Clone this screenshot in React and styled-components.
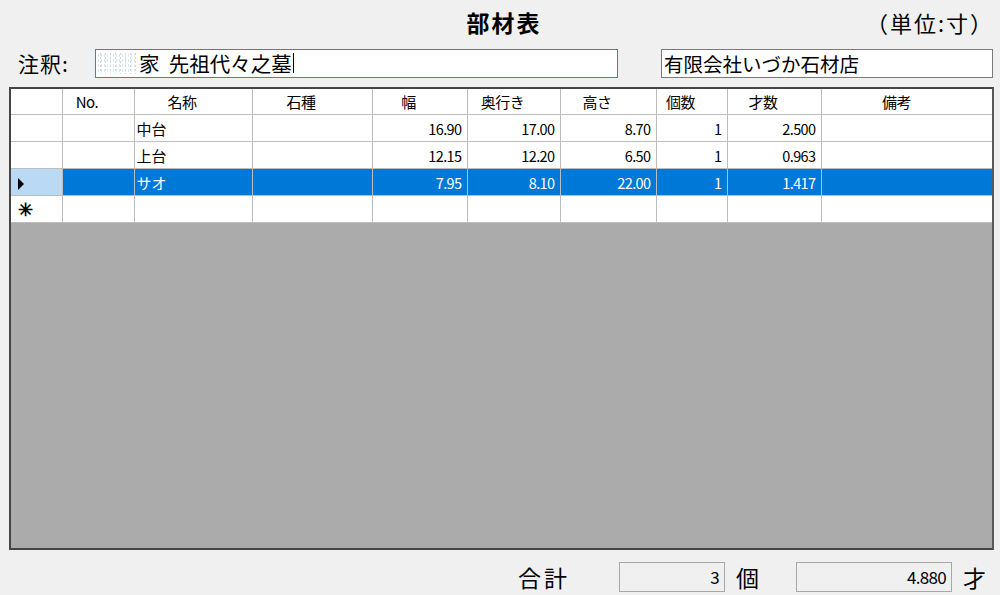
import React from "react";
import styled, { createGlobalStyle } from "styled-components";

const columns = [
  { key: "no", label: "No.", width: 72 },
  { key: "name", label: "名称", width: 118, align: "left" },
  { key: "stone", label: "石種", width: 120 },
  { key: "w", label: "幅", width: 95, align: "right" },
  { key: "d", label: "奥行き", width: 93, align: "right" },
  { key: "h", label: "高さ", width: 96, align: "right" },
  { key: "qty", label: "個数", width: 71, align: "right" },
  { key: "sai", label: "才数", width: 94, align: "right" },
  { key: "note", label: "備考", width: 173 },
];

const rows = [
  { name: "中台", w: "16.90", d: "17.00", h: "8.70", qty: "1", sai: "2.500" },
  { name: "上台", w: "12.15", d: "12.20", h: "6.50", qty: "1", sai: "0.963" },
  { name: "サオ", w: "7.95", d: "8.10", h: "22.00", qty: "1", sai: "1.417", selected: true },
];

const App = () => {
  return (
    <>
      <Global />
      <Window>
        <TitleBar>
          <span />
          <Title>部材表</Title>
          <Unit>（単位:寸）</Unit>
        </TitleBar>

        <NoteRow>
          <NoteLabel>注釈:</NoteLabel>
          <TextBox $focused $width={523}>
            <Redacted />
            家&nbsp;&nbsp;先祖代々之墓
            <Caret />
          </TextBox>
          <TextBox $width={332}>有限会社いづか石材店</TextBox>
        </NoteRow>

        <GridFrame>
          <Table>
            <colgroup>
              <col style={{ width: 51 }} />
              {columns.map((c) => (
                <col key={c.key} style={{ width: c.width }} />
              ))}
            </colgroup>
            <thead>
              <tr>
                <HeadCell />
                {columns.map((c) => (
                  <HeadCell key={c.key}>{c.label}</HeadCell>
                ))}
              </tr>
            </thead>
            <tbody>
              {rows.map((r, i) => (
                <tr key={i}>
                  <RowHead $selected={r.selected}>
                    {r.selected && <Arrow />}
                  </RowHead>
                  {columns.map((c) => (
                    <Cell key={c.key} $align={c.align} $selected={r.selected}>
                      {r[c.key] || ""}
                    </Cell>
                  ))}
                </tr>
              ))}
              <tr>
                <RowHead>
                  <Star>✳</Star>
                </RowHead>
                {columns.map((c) => (
                  <Cell key={c.key} />
                ))}
              </tr>
            </tbody>
          </Table>
        </GridFrame>

        <TotalRow>
          <TotalLabel>合計</TotalLabel>
          <ReadBox $width={106}>3</ReadBox>
          <UnitChar>個</UnitChar>
          <ReadBox $width={156}>4.880</ReadBox>
          <UnitChar>才</UnitChar>
        </TotalRow>
      </Window>
    </>
  );
};

export default App;

const Global = createGlobalStyle`
  html, body {
    margin: 0;
    padding: 0;
    background: #f0f0f0;
  }
  body {
    font-family: "Noto Sans CJK JP", "Noto Sans", sans-serif;
    color: #000;
  }
`;

const Window = styled.div`
  width: 1000px;
  height: 595px;
  background: #f0f0f0;
  display: flex;
  flex-direction: column;
  box-sizing: border-box;
  overflow: hidden;
`;

const TitleBar = styled.div`
  display: grid;
  grid-template-columns: 1fr auto 1fr;
  align-items: center;
  height: 44px;
  padding: 0 6px 0 6px;
`;

const Title = styled.div`
  font-size: 23px;
  font-weight: bold;
  letter-spacing: 2px;
  padding-left: 8px;
`;

const Unit = styled.div`
  font-size: 22px;
  justify-self: end;
  letter-spacing: 2px;
`;

const NoteRow = styled.div`
  display: flex;
  align-items: center;
  height: 30px;
  margin-top: 4px;
  padding-left: 18px;
`;

const NoteLabel = styled.div`
  font-size: 21px;
  width: 77px;
  letter-spacing: 1px;
`;

const TextBox = styled.div`
  box-sizing: border-box;
  width: ${(p) => p.$width}px;
  height: 29px;
  background: #fff;
  border: 1px solid ${(p) => (p.$focused ? "#2f86d6" : "#7a7a7a")};
  font-size: ${(p) => (p.$focused ? "20.5px" : "19.5px")};
  line-height: 27px;
  padding-left: 2px;
  display: flex;
  align-items: center;
  white-space: nowrap;
  & + & {
    margin-left: 43px;
  }
`;

const Redacted = styled.span`
  display: inline-block;
  width: 38px;
  height: 22px;
  margin-right: 3px;
  background-image: radial-gradient(#b4c8dc 0.7px, transparent 1px),
    radial-gradient(#d4dce6 0.7px, transparent 1px);
  background-size: 5px 4px, 3px 5px;
  background-position: 0 0, 2px 1px;
  opacity: 0.7;
`;

const Caret = styled.span`
  display: inline-block;
  width: 1px;
  height: 20px;
  background: #000;
  margin-left: 1px;
`;

const GridFrame = styled.div`
  box-sizing: border-box;
  margin: 9px 6px 0 9px;
  height: 463px;
  background: #ababab;
  border: 2px solid #454545;
  border-right-color: #5a5a5a;
  overflow: hidden;
`;

const Table = styled.table`
  border-collapse: collapse;
  table-layout: fixed;
  width: 983px;
  font-size: 15px;
`;

const HeadCell = styled.th`
  height: 25px;
  padding: 0 22px 0 0;
  font-weight: normal;
  background: #fff;
  border-right: 1px solid #bdbdbd;
  border-bottom: 1px solid #bdbdbd;
  text-align: center;
  white-space: nowrap;
  letter-spacing: -0.5px;
`;

const RowHead = styled.td`
  height: 26px;
  padding: 0 0 0 7px;
  background: ${(p) => (p.$selected ? "#b9d9f4" : "#fff")};
  border-right: 1px solid #bdbdbd;
  border-bottom: 1px solid #bdbdbd;
`;

const Arrow = styled.span`
  display: inline-block;
  width: 0;
  height: 0;
  border-top: 6px solid transparent;
  border-bottom: 6px solid transparent;
  border-left: 6px solid #000;
  vertical-align: middle;
`;

const Star = styled.span`
  font-size: 18px;
  font-weight: bold;
  line-height: 1;
`;

const Cell = styled.td`
  height: 26px;
  padding: ${(p) => (p.$align === "right" ? "0 5px 0 0" : "0 0 0 2px")};
  text-align: ${(p) => p.$align || "left"};
  font-size: ${(p) => (p.$align === "right" ? "14.5px" : "15px")};
  letter-spacing: ${(p) => (p.$align === "right" ? "-0.6px" : "0")};
  background: ${(p) => (p.$selected ? "#0078d7" : "#fff")};
  color: ${(p) => (p.$selected ? "#fff" : "#000")};
  border-right: 1px solid #bdbdbd;
  border-bottom: 1px solid #bdbdbd;
  white-space: nowrap;
`;

const TotalRow = styled.div`
  display: flex;
  align-items: center;
  justify-content: flex-end;
  height: 30px;
  margin-top: 12px;
  padding-right: 14px;
`;

const TotalLabel = styled.div`
  font-size: 23px;
  letter-spacing: 3px;
  margin-right: 49px;
`;

const ReadBox = styled.div`
  box-sizing: border-box;
  width: ${(p) => p.$width}px;
  height: 30px;
  border: 1px solid #a8a8a8;
  background: #f0f0f0;
  font-size: 17px;
  letter-spacing: -0.7px;
  text-align: right;
  line-height: 28px;
  padding-right: 5px;
`;

const UnitChar = styled.div`
  font-size: 23px;
  margin: 0 0 0 11px;
  & + ${ReadBox} {
    margin-left: 37px;
  }
`;
